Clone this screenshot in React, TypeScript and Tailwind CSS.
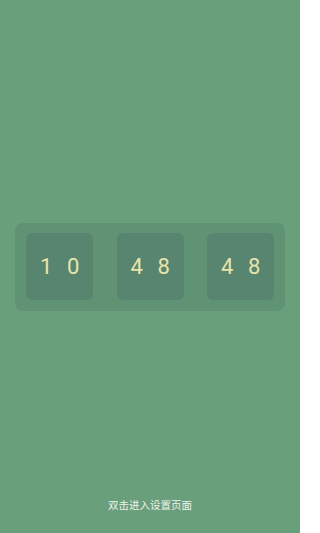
export default function App() {
  const groups = [
    ['1', '0'],
    ['4', '8'],
    ['4', '8'],
  ];

  return (
    <div
      className="relative flex h-[533px] w-[300px] flex-col items-center justify-center bg-[#6a9f7b]"
      style={{ fontFamily: 'Roboto, "Noto Sans CJK SC", sans-serif' }}
    >
      <div className="flex h-[88px] w-[270px] items-center justify-between rounded-[8px] bg-[#5f9373] px-[11px]">
        {groups.map((g, i) => (
          <div
            key={i}
            className="flex h-[67px] w-[67px] items-center justify-center gap-[15px] rounded-[6px] bg-[#588570] text-[22px] leading-none text-[#e9e4aa]"
          >
            {g.map((d, j) => (
              <span key={j} className="w-[12px] text-center">
                {d}
              </span>
            ))}
          </div>
        ))}
      </div>
      <div className="absolute bottom-[19px] left-0 right-0 text-center text-[10.5px] text-[#eef3ee]">
        双击进入设置页面
      </div>
    </div>
  );
}
